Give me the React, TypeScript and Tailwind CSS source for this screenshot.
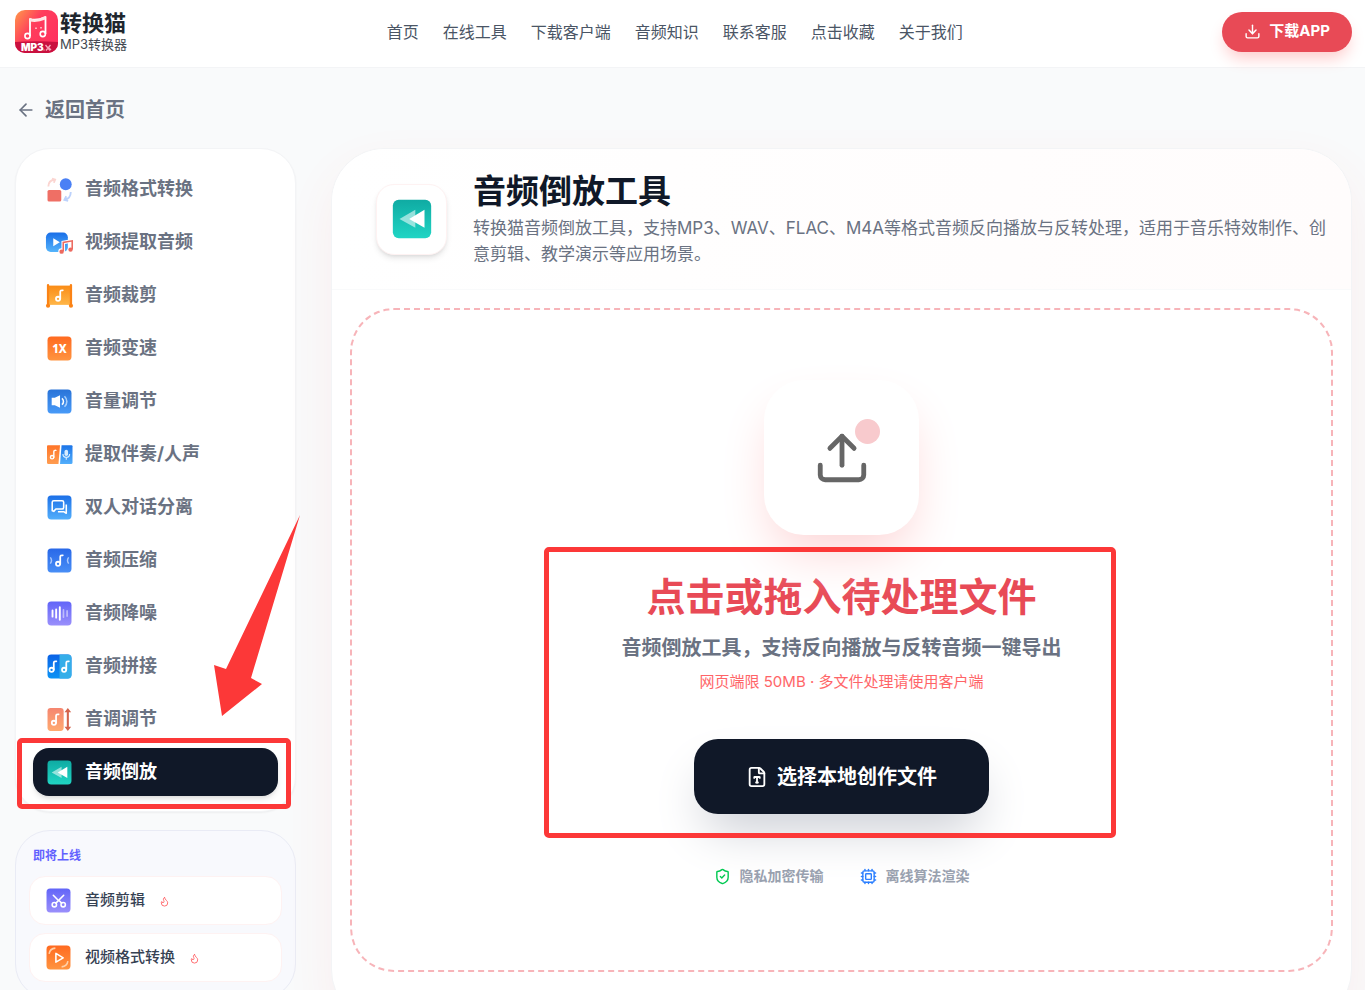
import React from "react";
import { ArrowLeft, Cpu, Download, FileType, Flame, ShieldCheck, Upload } from "lucide-react";

const NAV = ["首页", "在线工具", "下载客户端", "音频知识", "联系客服", "点击收藏", "关于我们"];

interface TileProps {
  id: string;
  from: string;
  to: string;
  children?: React.ReactNode;
}

const Tile: React.FC<TileProps> = ({ id, from, to, children }) => (
  <svg viewBox="0 0 24 24" className="size-full" aria-hidden="true">
    <defs>
      <linearGradient id={id} x1="0" y1="0" x2="0" y2="1">
        <stop offset="0" stopColor={from} />
        <stop offset="1" stopColor={to} />
      </linearGradient>
    </defs>
    <rect x="0.5" y="0.5" width="23" height="23" rx="3.5" fill={`url(#${id})`} />
    {children}
  </svg>
);

// small eighth note, drawn around (x, y)
const Note = ({ x, y, s = 1 }: { x: number; y: number; s?: number }) => (
  <g transform={`translate(${x} ${y}) scale(${s})`} fill="none" stroke="#fff" strokeWidth="1.7" strokeLinecap="round">
    <circle cx="-1.4" cy="3.2" r="2" />
    <path d="M.7 3.2V-3.6Q.8-5.2 3.2-5" />
  </g>
);

const FormatIcon = () => (
  <svg viewBox="0 0 24 24" className="size-full" aria-hidden="true">
    <circle cx="18" cy="7" r="5.7" fill="#4a80f5" />
    <rect x="0.5" y="12.5" width="13.2" height="11" rx="1.5" fill="#ef6f65" />
    <path d="M1.3 9.2C1.3 5.5 3.5 3 7.2 2.600M4.800 1.600l3 .9-1.200 3" fill="none" stroke="#fbd5d1" strokeWidth="1.8" />
    <path d="M22.8 14.5c0 4-2.2 6.800-6 7.500M18.500 18.500l-1.800 3.500 3.600.9" fill="none" stroke="#bcd2fc" strokeWidth="1.8" />
  </svg>
);

const VideoIcon = () => (
  <svg viewBox="0 0 24 24" className="size-full overflow-visible" aria-hidden="true">
    <defs>
      <linearGradient id="vid" x1="0" y1="0" x2="0" y2="1">
        <stop offset="0" stopColor="#1a6fe8" />
        <stop offset="1" stopColor="#55b4fb" />
      </linearGradient>
    </defs>
    <rect x="-1" y="2.5" width="21" height="18.5" rx="4.5" fill="url(#vid)" />
    <path d="M6 8v7.5l6.3-3.7z" fill="#fff" />
    <g fill="none" stroke="#fff" strokeWidth="3.4">
      <path d="M15.6 20.5V12l8.6-1.6V18" />
      <circle cx="14" cy="20.8" r="1.5" />
    </g>
    <path d="M15.6 20.5V12l8.6-1.6V18.500" fill="none" stroke="#ec6a60" strokeWidth="1.5" />
    <circle cx="14" cy="20.8" r="2.1" fill="#ec6a60" />
    <circle cx="22.600" cy="18.800" r="2.1" fill="#ec6a60" />
  </svg>
);

const CropIcon = () => (
  <svg viewBox="0 0 24 24" className="size-full overflow-visible" aria-hidden="true">
    <defs>
      <linearGradient id="crop" x1="0" y1="0" x2="0" y2="1">
        <stop offset="0" stopColor="#fa8c16" />
        <stop offset="1" stopColor="#ffb648" />
      </linearGradient>
    </defs>
    <rect x="1" y="2.5" width="22" height="18.5" fill="url(#crop)" />
    <path d="M1 2v20M23 2v20" stroke="#fb8315" strokeWidth="2.2" strokeLinecap="round" />
    <circle cx="1" cy="21.8" r="2" fill="#fb8315" />
    <circle cx="23" cy="21.8" r="2" fill="#fb8315" />
    <Note x={12} y={12} />
  </svg>
);

const SplitIcon = () => (
  <svg viewBox="0 0 24 24" className="size-full overflow-visible" aria-hidden="true">
    <defs>
      <linearGradient id="spa" x1="0" y1="0" x2="0" y2="1">
        <stop offset="0" stopColor="#ff7427" />
        <stop offset="1" stopColor="#ff9c50" />
      </linearGradient>
      <linearGradient id="spb" x1="0" y1="0" x2="0" y2="1">
        <stop offset="0" stopColor="#1b74e8" />
        <stop offset="1" stopColor="#52aefb" />
      </linearGradient>
    </defs>
    <path d="M1 3h11.5L11 21H1q-1 0-1-1V4q0-1 1-1z" fill="url(#spa)" />
    <path d="M14 3h9.5q1 0 1 1v16q0 1-1 1H12.5z" fill="url(#spb)" />
    <Note x={6} y={12} s={0.8} />
    <rect x="16.8" y="7.5" width="3.4" height="6" rx="1.7" fill="#d7ecff" />
    <path d="M15.3 11.5c0 4.300 6.400 4.300 6.400 0M18.500 14.800v2.200" fill="none" stroke="#d7ecff" strokeWidth="1.1" />
  </svg>
);

const PitchIcon = () => (
  <svg viewBox="0 0 24 24" className="size-full" aria-hidden="true">
    <defs>
      <linearGradient id="pit" x1="0" y1="0" x2="0" y2="1">
        <stop offset="0" stopColor="#f58670" />
        <stop offset="1" stopColor="#ffaa70" />
      </linearGradient>
    </defs>
    <rect x="0.5" y="1" width="15.5" height="22" rx="3" fill="url(#pit)" />
    <Note x={8} y={12} />
    <path d="M20 3v18" stroke="#d4644c" strokeWidth="2" />
    <path d="M20 1l3.200 4h-6.400zM20 23l3.200-4h-6.400z" fill="#d4644c" />
  </svg>
);

const ReverseIcon = ({ id }: { id: string }) => (
  <Tile id={id} from="#0faba3" to="#20d5c4">
    <path d="M14 6.5v10.8L4.500 12z" fill="#fff" opacity="0.55" />
    <path d="M19.5 6.5v10.8L10.300 12z" fill="#fff" />
  </Tile>
);

const TOOLS = [
  { label: "音频格式转换", icon: <FormatIcon /> },
  { label: "视频提取音频", icon: <VideoIcon /> },
  { label: "音频裁剪", icon: <CropIcon /> },
  {
    label: "音频变速",
    icon: (
      <Tile id="speed" from="#ff6a20" to="#ff9440">
        <text x="12" y="16" textAnchor="middle" fontSize="11" fontWeight="800" fill="#fff" className="font-['Noto_Sans',sans-serif]">
          1X
        </text>
      </Tile>
    ),
  },
  {
    label: "音量调节",
    icon: (
      <Tile id="vol" from="#2a74d8" to="#489af8">
        <path d="M4.5 8.5h3l5-2.5v12l-5-2.500h-3z" fill="#fff" />
        <path d="M14.3 9c2 1.500 2 4.500 0 6" fill="none" stroke="#fff" strokeWidth="1.5" />
        <path d="M16.8 7c3 2.800 3 7.200 0 10" fill="none" stroke="#a9d0fc" strokeWidth="1.5" />
      </Tile>
    ),
  },
  { label: "提取伴奏/人声", icon: <SplitIcon /> },
  {
    label: "双人对话分离",
    icon: (
      <Tile id="talk" from="#1c70e8" to="#52aefb">
        <path
          d="M6.5 5.5h8q1.500 0 1.500 1.500v5q0 1.500-1.500 1.500H8.500l-2 2.200-1.500-.5V7q0-1.500 1.500-1.500zM18.500 9v8.500l-2.500-1.500H10.500"
          fill="none"
          stroke="#fff"
          strokeWidth="1.5"
          strokeLinejoin="round"
        />
      </Tile>
    ),
  },
  {
    label: "音频压缩",
    icon: (
      <Tile id="zip" from="#2968e8" to="#488ef6">
        <Note x={12} y={12} />
        <path d="M3.2 9c1.500 2 1.500 4 0 6M20.800 9c-1.500 2-1.500 4 0 6" fill="none" stroke="#a9c8fc" strokeWidth="1.4" />
      </Tile>
    ),
  },
  {
    label: "音频降噪",
    icon: (
      <Tile id="noise" from="#6265f8" to="#9a8ffb">
        <path d="M5.3 9v6M8.800 8v8M12.300 6v12" stroke="#fff" strokeWidth="1.8" strokeLinecap="round" />
        <path d="M15.8 8.500v7M19.300 9.500v5" stroke="#fff" strokeWidth="1.6" strokeLinecap="round" opacity="0.5" />
      </Tile>
    ),
  },
  {
    label: "音频拼接",
    icon: (
      <Tile id="join" from="#0a62e6" to="#0b93f5">
        <path d="M12 .5h8q3.500 0 3.500 3.500v16q0 3.500-3.500 3.500h-8z" fill="#35aee9" />
        <Note x={5.8} y={12} />
        <Note x={17.8} y={12} />
      </Tile>
    ),
  },
  { label: "音调调节", icon: <PitchIcon /> },
  { label: "音频倒放", icon: <ReverseIcon id="rev" />, active: true },
];

const SOON = [
  {
    label: "音频剪辑",
    icon: (
      <Tile id="cut" from="#6265f8" to="#9a8ffb">
        <g fill="none" stroke="#fff" strokeWidth="1.5" strokeLinecap="round">
          <circle cx="8" cy="16" r="2.1" />
          <circle cx="16.5" cy="16" r="2.1" />
          <path d="M9.5 14.5L17 7M15 14.500l-2-2M7 7l4 4" />
        </g>
      </Tile>
    ),
  },
  {
    label: "视频格式转换",
    icon: (
      <Tile id="vfmt" from="#ff6a20" to="#ff9440">
        <path d="M9.5 8v8.500l7-4.200z" fill="none" stroke="#fff" strokeWidth="1.5" strokeLinejoin="round" />
        <path d="M3 8.5C3.500 5 5.500 3.300 9 3M21 15.500c-.5 3.500-2.500 5.200-6 5.500" fill="none" stroke="#ffd0a8" strokeWidth="1.5" />
      </Tile>
    ),
  },
];

const Logo = () => (
  <a href="#" className="flex items-center gap-0.5 text-[#20262e]">
    <svg viewBox="0 0 43 43" className="size-[43px]" aria-hidden="true">
      <defs>
        <linearGradient id="logo" x1="0" y1="0" x2="1" y2="0.7">
          <stop offset="0" stopColor="#ff9a4a" />
          <stop offset="0.45" stopColor="#ff3d5c" />
          <stop offset="1" stopColor="#ff2f5e" />
        </linearGradient>
        <clipPath id="logoClip">
          <rect width="43" height="43" rx="10" />
        </clipPath>
      </defs>
      <g clipPath="url(#logoClip)">
        <rect width="43" height="43" fill="url(#logo)" />
        <path d="M0 32q21-1.500 43 0v11H0z" fill="#c9103f" />
        <path d="M15 26V9q7 2 15.500-2v17" fill="none" stroke="#fff" strokeWidth="1.8" strokeLinejoin="round" />
        <path d="M15 8l3.500 1.500q4 .5 7-1.500l5-2v3.500q-8 3.500-15.500 2z" fill="#ffe3e3" />
        <circle cx="12.5" cy="26" r="2.6" fill="none" stroke="#fff" strokeWidth="1.6" />
        <circle cx="27.800" cy="24" r="2.6" fill="none" stroke="#fff" strokeWidth="1.6" />
        <path d="M21 17.500v1.500M26 17v1.500" stroke="#ffd5d5" strokeWidth="1.5" />
        <text x="6" y="41" fontSize="10" fontWeight="900" fill="#fff" className="font-['Inter',sans-serif]">
          MP3
        </text>
        <path d="M28.5 40h1M31 40.500l4.500-5.500M30.500 35l4.500 5.500M34 38l2 2" stroke="#f5a5b8" strokeWidth="1.3" />
      </g>
    </svg>
    <span className="flex flex-col">
      <span className="text-[22px] leading-6 font-bold">转换猫</span>
      <span className="text-[13px] leading-[18px] text-[#444a52]">MP3转换器</span>
    </span>
  </a>
);

const Header = () => (
  <header className="flex h-[68px] items-center justify-between border-b border-gray-100 bg-white pr-[13px] pb-1 pl-[15px]">
    <Logo />
    <nav className="flex gap-6 text-base text-gray-600">
      {NAV.map((item) => (
        <a key={item} href="#">
          {item}
        </a>
      ))}
    </nav>
    <button className="flex h-10 items-center gap-2 rounded-full bg-[#e84a56] px-[22px] text-[15px] font-bold text-white shadow-[0_9px_16px_-3px_#fecaca]">
      <Download size={17} strokeWidth={2} />
      下载APP
    </button>
  </header>
);

const Sidebar = () => (
  <aside className="flex w-[281px] shrink-0 flex-col gap-[18px]">
    <div className="flex flex-col gap-[5px] rounded-[35px] border border-gray-100 bg-white px-[17px] pt-4 pb-[15px] shadow-xs">
      {TOOLS.map((tool) => (
        <a
          key={tool.label}
          href="#"
          className={`flex h-12 items-center gap-[13px] rounded-2xl px-[14px] text-lg font-bold ${
            tool.active ? "bg-gray-900 text-white shadow-md" : "text-gray-500"
          }`}
        >
          <span className="size-[25px]">{tool.icon}</span>
          {tool.label}
        </a>
      ))}
    </div>
    <div className="rounded-[35px] border border-[#e9ebf5] bg-[#f8f9fd] px-[13px] pt-[17px] pb-4">
      <h2 className="px-1 text-xs leading-4 font-bold text-indigo-500">即将上线</h2>
      <div className="mt-3 flex flex-col gap-2">
        {SOON.map((tool) => (
          <a
            key={tool.label}
            href="#"
            className="flex h-[49px] items-center gap-[14px] rounded-2xl border border-red-50 bg-white px-4 text-[15px] font-medium text-gray-700"
          >
            <span className="size-[25px]">{tool.icon}</span>
            {tool.label}
            <Flame size={11} className="mt-0.5 text-red-400" />
          </a>
        ))}
      </div>
    </div>
  </aside>
);

const UploadPanel = () => (
  <div className="m-[18px] flex flex-col items-center rounded-[44px] border-2 border-dashed border-[#f7b4b9] pt-[70px] pb-[84px]">
    <div className="relative flex size-[155px] items-center justify-center rounded-[40px] bg-white shadow-[0_25px_50px_-8px_#fdd5d6]">
      <Upload size={58} strokeWidth={2} className="text-[#666]" />
      <span className="absolute top-[39px] right-[39px] size-[25px] rounded-full bg-[#f8cacd]" />
    </div>
    <h2 className="mt-[38px] text-[39px] leading-12 font-bold text-[#e84a56]">点击或拖入待处理文件</h2>
    <p className="mt-[13px] text-xl leading-7 font-bold text-gray-500">音频倒放工具，支持反向播放与反转音频一键导出</p>
    <p className="mt-2 text-[15px] leading-6 text-red-400">网页端限 50MB · 多文件处理请使用客户端</p>
    <button className="mt-[45px] flex h-[75px] items-center gap-[9px] rounded-3xl bg-gray-900 px-[52px] text-xl font-bold text-white shadow-[0_25px_50px_-12px_#c5c8d0]">
      <FileType size={22} strokeWidth={2} />
      选择本地创作文件
    </button>
    <div className="mt-[52px] flex gap-9 text-sm font-bold text-gray-400">
      <span className="flex items-center gap-[9px]">
        <ShieldCheck size={17} className="text-green-500" />
        隐私加密传输
      </span>
      <span className="flex items-center gap-[9px]">
        <Cpu size={17} className="text-blue-500" />
        离线算法渲染
      </span>
    </div>
  </div>
);

const App: React.FC = () => {
  return (
    <div className="relative min-h-screen overflow-hidden bg-gray-50 font-['Inter','Noto_Sans_CJK_SC',sans-serif]">
      <Header />
      <a href="#" className="mt-7 ml-4 flex w-fit items-center gap-[9px] text-xl leading-7 font-bold text-gray-500">
        <ArrowLeft size={20} strokeWidth={2} />
        返回首页
      </a>
      <div className="mt-6 flex items-start gap-[35px] pr-[13px] pb-8 pl-[15px]">
        <Sidebar />
        <main className="min-w-0 flex-1 rounded-[53px] border border-gray-100 bg-white pb-8 shadow-[0_20px_50px_#f9eeee]">
          <div className="flex items-center gap-[26px] rounded-t-[53px] border-b border-gray-50 bg-linear-to-r from-white to-[#fffcfc] pt-[22px] pb-[22px] pl-11">
            <div className="flex size-[71px] shrink-0 items-center justify-center rounded-[18px] border border-red-50 bg-white shadow-md">
              <span className="size-10">
                <ReverseIcon id="revLarge" />
              </span>
            </div>
            <div>
              <h1 className="text-[33px] leading-10 font-bold text-gray-900">音频倒放工具</h1>
              <p className="mt-1 pr-5 text-[17px] leading-[26px] text-gray-500">
                转换猫音频倒放工具，支持MP3、WAV、FLAC、M4A等格式音频反向播放与反转处理，适用于音乐特效制作、创意剪辑、教学演示等应用场景。
              </p>
            </div>
          </div>
          <UploadPanel />
        </main>
      </div>

      {/* red call-outs over the page */}
      <div className="pointer-events-none absolute top-[547px] left-[544px] h-[291px] w-[572px] rounded-[5px] border-5 border-[#fc3838]" />
      <div className="pointer-events-none absolute top-[738px] left-[17px] h-[71px] w-[274px] rounded-[5px] border-5 border-[#fc3838]" />
      <svg viewBox="0 0 86 201" className="pointer-events-none absolute top-[515px] left-[214px] h-[201px] w-[86px]" aria-hidden="true">
        <path d="M86 0L37 163l11 6L8 201 0 150l12 4z" fill="#fc3838" />
      </svg>
    </div>
  );
};

export default App;
